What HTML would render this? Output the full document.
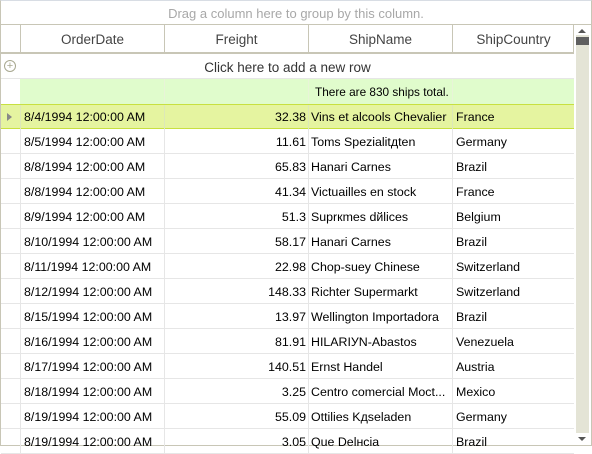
<!DOCTYPE html>
<html><head><meta charset="utf-8"><style>
*{margin:0;padding:0;box-sizing:border-box}
body{width:592px;height:446px;overflow:hidden;background:#fff;font-family:"Liberation Sans",sans-serif;font-size:12.4px;color:#000;position:relative}
.frame{position:absolute;left:0;top:0;width:592px;height:446px;border:1px solid #c8c6b6;border-top-color:#d8dde4}
.abs{position:absolute}
.grp{left:1px;top:1px;width:590px;height:24px;text-align:center;line-height:26px;color:#a8a8a8;font-size:13px;border-bottom:1px solid #c8c6b6}
.hdr{top:25px;height:29px;border-bottom:2px solid #c8c6b6;background:#fff}
.hc{position:absolute;top:0;height:27px;line-height:29px;text-align:center;font-size:13.5px;color:#444;border-left:1px solid #c8c6b6}
.row{position:absolute;left:1px;width:573px;height:25px;border-bottom:1px solid #e6e6e6}
.c{position:absolute;top:0;height:24px;line-height:26px;white-space:nowrap;overflow:hidden;border-left:1px solid #e6e6e6}
</style></head><body>
<div class="frame"></div>
<div class="abs grp">Drag a column here to group by this column.</div>
<div class="abs hdr" style="left:1px;width:573px;border-right:1px solid #c8c6b6">
 <div class="hc" style="left:19px;width:144px">OrderDate</div>
 <div class="hc" style="left:163px;width:144px">Freight</div>
 <div class="hc" style="left:307px;width:144px">ShipName</div>
 <div class="hc" style="left:451px;width:122px">ShipCountry</div>
</div>
<div class="abs" style="left:1px;top:54px;width:573px;height:25px;line-height:27px;text-align:center;font-size:13.5px;color:#333;border-bottom:1px solid #e6e6e6">Click here to add a new row</div>
<div class="abs" style="left:4px;top:60px;width:12px;height:12px;border:1px solid #a8a890;border-radius:50%;color:#a8a890;font-size:11px;line-height:10px;text-align:center">+</div>
<div class="abs" style="left:20px;top:79px;width:554px;height:25px;background:#e0fccc">
 <div class="c" style="left:144px;width:144px;border-color:#e8f4d8"></div>
 <div class="c" style="left:288px;width:144px;border-color:#e8f4d8;padding-left:6px;font-size:11.8px">There are 830 ships total.</div>
 <div class="c" style="left:432px;width:122px;border-color:#e8f4d8"></div>
</div>
<div id="rows"></div>
<div class="abs" style="left:576px;top:29px;width:13px;height:413px;background:#e4e4d6"></div>
<div class="abs" style="left:576px;top:27px;width:13px;height:8px;background:#fff"></div>
<div class="abs" style="left:578px;top:29px;width:0;height:0;border-left:4px solid transparent;border-right:4px solid transparent;border-bottom:4px solid #555"></div>
<div class="abs" style="left:576px;top:37px;width:13px;height:8px;background:#5f5f5f"></div>
<div class="abs" style="left:576px;top:433px;width:13px;height:12px;background:#fff"></div>
<div class="abs" style="left:578px;top:437px;width:0;height:0;border-left:4px solid transparent;border-right:4px solid transparent;border-top:4px solid #555"></div>
<script>
var d=[["8/4/1994 12:00:00 AM","32.38","Vins et alcools Chevalier","France"],
["8/5/1994 12:00:00 AM","11.61","Toms Spezialitдten","Germany"],
["8/8/1994 12:00:00 AM","65.83","Hanari Carnes","Brazil"],
["8/8/1994 12:00:00 AM","41.34","Victuailles en stock","France"],
["8/9/1994 12:00:00 AM","51.3","Suprкmes dйlices","Belgium"],
["8/10/1994 12:00:00 AM","58.17","Hanari Carnes","Brazil"],
["8/11/1994 12:00:00 AM","22.98","Chop-suey Chinese","Switzerland"],
["8/12/1994 12:00:00 AM","148.33","Richter Supermarkt","Switzerland"],
["8/15/1994 12:00:00 AM","13.97","Wellington Importadora","Brazil"],
["8/16/1994 12:00:00 AM","81.91","HILARIУN-Abastos","Venezuela"],
["8/17/1994 12:00:00 AM","140.51","Ernst Handel","Austria"],
["8/18/1994 12:00:00 AM","3.25","Centro comercial Moct...","Mexico"],
["8/19/1994 12:00:00 AM","55.09","Ottilies Kдseladen","Germany"],
["8/19/1994 12:00:00 AM","3.05","Que Delнcia","Brazil"]];
var h="";
d.forEach(function(r,i){
 var y=104+i*25,sel=i==0;
 var st=sel?"background:#e5f4a0;border-top:1px solid #c8e040;border-bottom:1px solid #c8e040;":"";
 h+='<div class="row" style="top:'+y+'px;'+st+'">';
 if(sel)h+='<div style="position:absolute;left:6px;top:8px;border-top:4px solid transparent;border-bottom:4px solid transparent;border-left:5px solid #888"></div>';
 var bc=sel?"border-color:#dde8b8;line-height:24px;":"";
 h+='<div class="c" style="left:19px;width:144px;padding-left:3px;'+bc+'">'+r[0]+'</div>';
 h+='<div class="c" style="left:163px;width:144px;text-align:right;padding-right:2px;'+bc+'">'+r[1]+'</div>';
 h+='<div class="c" style="left:307px;width:144px;padding-left:2px;'+bc+'">'+r[2]+'</div>';
 h+='<div class="c" style="left:451px;width:122px;padding-left:3px;'+bc+'">'+r[3]+'</div>';
 h+='</div>';
});
document.getElementById("rows").innerHTML=h;
</script>
</body></html>
